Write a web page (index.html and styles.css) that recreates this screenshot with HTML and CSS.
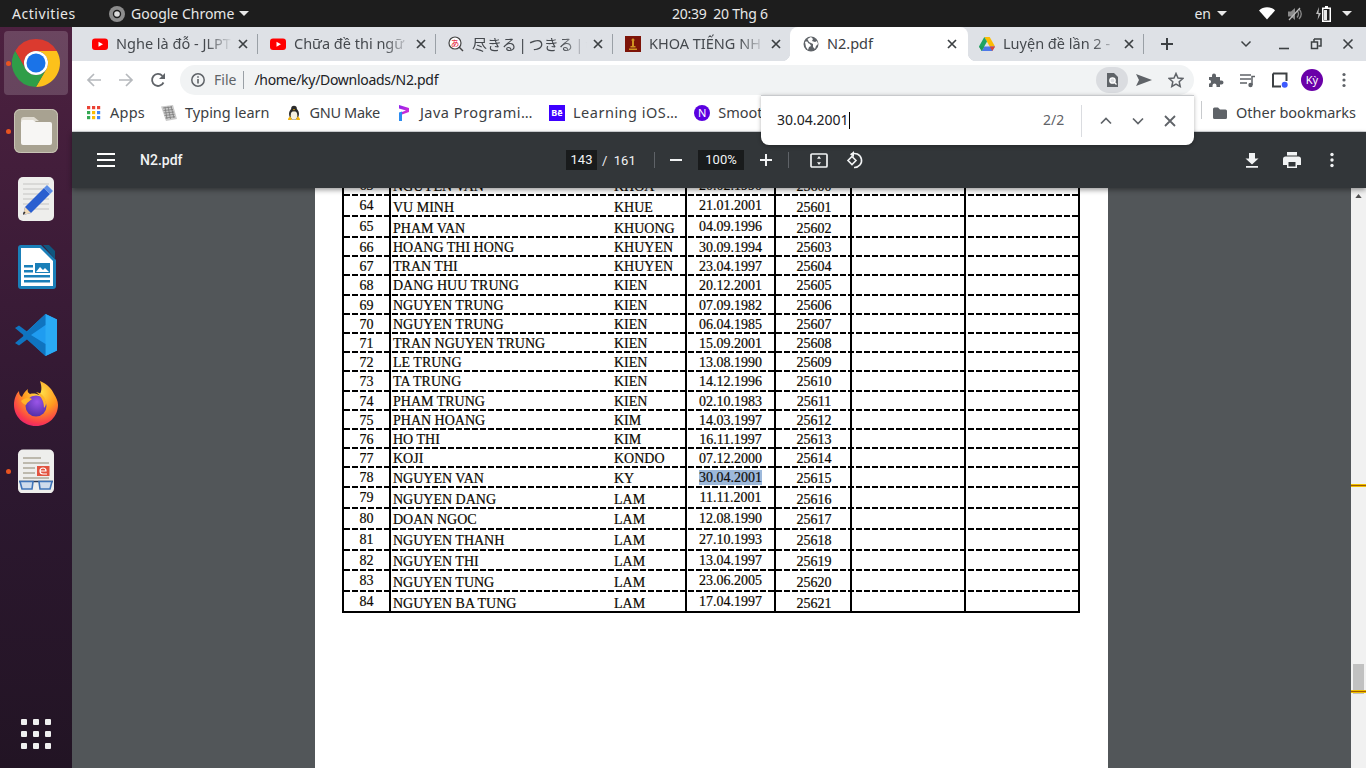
FILE: index.html
```html
<!DOCTYPE html>
<html lang="vi">
<head>
<meta charset="utf-8">
<title>N2.pdf</title>
<link rel="stylesheet" href="styles.css">
</head>
<body>
<svg class="defs" aria-hidden="true"><symbol id="x" viewBox="0 0 12 12"><path d="M2 2l8 8M10 2l-8 8" stroke="#3c4043" stroke-width="1.700" fill="none"/></symbol></svg>
<header class="topbar">
  <div class="top-left">
    <span class="activities">Activities</span>
    <span class="appmenu">
      <svg class="i16" viewBox="0 0 16 16"><circle cx="8" cy="8" r="8" fill="#8d8d8d"/><circle cx="8" cy="8" r="4.200" fill="#1d1d1d"/><circle cx="8" cy="8" r="2.800" fill="#dcdcdc"/></svg>
      <span>Google Chrome</span><i class="caret"></i>
    </span>
  </div>
  <div class="clock">20:39&nbsp;&nbsp;20 Thg 6</div>
  <div class="top-right">
    <span class="lang">en</span><i class="caret lang-caret"></i>
    <svg class="wifi" viewBox="0 0 16 13"><path d="M0 3.400C4.500-.9 11.500-.9 16 3.400L8 12.600Z" fill="#fff"/></svg>
    <svg class="vol" viewBox="0 0 16 16"><path d="M1 5.500h3L8 2v12L4 10.500H1Z" fill="#8a8a8a"/><path d="M10 4.500q3 3.500 0 7M12 3q4.500 5 0 10" fill="none" stroke="#8a8a8a" stroke-width="1.300"/><path d="M2 14L13 2" stroke="#bbb" stroke-width="1.200"/></svg>
    <svg class="batt" viewBox="0 0 17 16"><path d="M4 1L1 8h2.500L2.500 14 6 7H3.500Z" fill="#bbb"/><path d="M10 0h3v1.500h3V16H7V1.500h3Z" fill="#fff"/><rect x="8.500" y="3" width="6" height="11.500" fill="#1d1d1d"/><rect x="9" y="4" width="3" height="10" fill="#e8e8e8"/></svg>
    <i class="caret sys-caret"></i>
  </div>
</header>

<div class="desk">
  <nav class="dock">
    <div class="dock-item active"><i class="run"></i>
      <svg class="d48" viewBox="0 0 48 48"><path d="M24 0A24 24 0 0 1 44.780 12H24A12 12 0 0 0 13.600 30L3.200 12A24 24 0 0 1 24 0Z" fill="#db3a2f"/><path d="M44.780 12A24 24 0 0 1 24 48L34.400 30A12 12 0 0 0 24 12Z" fill="#fcc11b"/><path d="M3.200 12A24 24 0 0 0 24 48L34.400 30A12 12 0 0 1 13.600 30Z" fill="#2f9e48"/><circle cx="24" cy="24" r="12" fill="#fff"/><circle cx="24" cy="24" r="9.500" fill="#1a73e8"/></svg>
    </div>
    <div class="dock-item"><i class="run"></i>
      <svg class="d44" viewBox="0 0 44 44"><rect width="44" height="44" rx="6" fill="#a8a291"/><rect x=".5" y=".5" width="43" height="43" rx="6" fill="none" stroke="#c8c3b5"/><path d="M7 11a3 3 0 0 1 3-3h10l5 4H7Z" fill="#e0dcd2"/><path d="M7 13a2 2 0 0 1 2-2h10l3 2h14a2 2 0 0 1 2 2v19a2 2 0 0 1-2 2H9a2 2 0 0 1-2-2Z" fill="#f7f6f4"/></svg>
    </div>
    <div class="dock-item">
      <svg class="d44" viewBox="0 0 44 44"><rect x="4" width="36" height="44" rx="5" fill="#eeeeec"/><path d="M9 7h26M9 12h26M9 17h26M9 22h26M9 27h26M14 32h21" stroke="#c4c4c2" stroke-width="1"/><path d="M11 30L30 11l6 6-19 19-8 2Z" fill="#2a5fd0"/><path d="M30 11l3-3 6 6-3 3Z" fill="#5c8fe8"/><path d="M11 30l6 6-8 2Z" fill="#eed9b8"/><path d="M9 36l1.500-1.500 1 1L9.500 38Z" fill="#333"/></svg>
    </div>
    <div class="dock-item">
      <svg class="d44" viewBox="0 0 44 44"><path d="M7 0h20l15 15v26a3 3 0 0 1-3 3H7a3 3 0 0 1-3-3V3a3 3 0 0 1 3-3Z" fill="#1a7fb8"/><path d="M7 3h19l13 13v25H7Z" fill="#fff"/><path d="M29 0l6 0 6 6v8Z" fill="#10567f"/><path d="M10 20h9v2.500h-9ZM10 25h9v2.500h-9ZM10 30h26v2.500H10ZM10 35h26v2.500H10Z" fill="#1a7fb8"/><rect x="21" y="18" width="15" height="10" fill="#1a7fb8"/><path d="M22 27l4-5 3 3 2-2 4 4Z" fill="#fff"/></svg>
    </div>
    <div class="dock-item">
      <svg class="d44" viewBox="0 0 44 44"><path d="M31.500 1L43 6.500v31L31.500 43 9 22Z" fill="#1f9cf0"/><path d="M31.500 1v42L43 37.500v-31Z" fill="#2aaaf5"/><path d="M31.500 1L13 18.500 5 12.500 1 15l9 7.500L1 30l4 2.500 8-6L31.500 43V31L17 22l14.500-10Z" fill="#0f74c0"/></svg>
    </div>
    <div class="dock-item">
      <svg class="d48" viewBox="0 0 48 48"><defs><radialGradient id="ffa" cx=".6" cy=".25" r=".85"><stop offset="0" stop-color="#ffe14a"/><stop offset=".45" stop-color="#ff9a1f"/><stop offset=".8" stop-color="#fa3c4c"/><stop offset="1" stop-color="#e0187e"/></radialGradient><radialGradient id="ffb" cx=".55" cy=".3" r=".8"><stop offset="0" stop-color="#9a55e8"/><stop offset="1" stop-color="#4a2ba0"/></radialGradient></defs><path d="M24 47C11 47 2 37 2 26c0-6 2-11 5-14 0 3 1 5 3 6 1-3 3-6 6-8-1 2 0 4 2 5 4-1 7 0 9 1 3-3 3-8 1-14 7 3 12 8 14 13 2 3 4 7 4 11 0 11-9 21-22 21Z" fill="url(#ffa)"/><circle cx="24" cy="27" r="10.500" fill="url(#ffb)"/><path d="M9 22c3-3 8-4 11-2-2 2-5 3-6 6-2-1-4-2-5-4ZM24 13c5 1 10 5 10 11 0 2-1 4-2 5 0-7-3-12-8-16Z" fill="#ffb42a"/></svg>
    </div>
    <div class="dock-item"><i class="run"></i>
      <svg class="d44" viewBox="0 0 44 44"><rect x="4" y="0.500" width="36" height="44" rx="5" fill="#eeeeec"/><path d="M9 9h18M9 14h26M9 19h12M9 24h12M9 29h26" stroke="#bdb9ad" stroke-width="2"/><rect x="23" y="17" width="12.500" height="10" fill="#e2533f"/><path d="M26 22h6q0-3-3-3t-3 3 3 3h4" fill="none" stroke="#fff" stroke-width="1.200"/><path d="M5 32.500h34" stroke="#2b3a55" stroke-width="1.500"/><path d="M6 32.500h13l-1 7.500H8ZM25 32.500h13l-2 7.500H26Z" fill="#cfdcec" stroke="#3f74b8" stroke-width="1.600"/></svg>
    </div>
    <div class="show-apps"><i></i><i></i><i></i><i></i><i></i><i></i><i></i><i></i><i></i></div>
  </nav>

  <main class="browser">
    <div class="tabstrip">
      <div class="tab sep">
        <svg class="fav" viewBox="0 0 16 16"><rect y="2.500" width="16" height="11.500" rx="3" fill="#f00"/><path d="M6.500 5.700v5.100L11 8.200Z" fill="#fff"/></svg>
        <span class="tab-title">Nghe là đỗ - JLPT</span><svg class="tab-x"><use href="#x"/></svg>
      </div>
      <div class="tab sep">
        <svg class="fav" viewBox="0 0 16 16"><rect y="2.500" width="16" height="11.500" rx="3" fill="#f00"/><path d="M6.500 5.700v5.100L11 8.200Z" fill="#fff"/></svg>
        <span class="tab-title">Chữa đề thi ngữ</span><svg class="tab-x"><use href="#x"/></svg>
      </div>
      <div class="tab sep third">
        <svg class="fav" viewBox="0 0 16 16"><circle cx="7" cy="7" r="6" fill="#fff" stroke="#444" stroke-width="1.200"/><path d="M11 11l4 4" stroke="#444" stroke-width="1.500"/><text x="7" y="10" font-size="8.500" text-anchor="middle" fill="#e01030" font-family="Noto Sans CJK JP">あ</text></svg>
        <span class="tab-title cjk">尽きる | つきる | t</span><svg class="tab-x"><use href="#x"/></svg>
      </div>
      <div class="tab">
        <svg class="fav" viewBox="0 0 16 16"><rect width="16" height="16" fill="#7d1408"/><path d="M8 2.500a1.500 1.500 0 0 1 1 2.600V10h1.500v1.500h-5V10H7V5.100a1.500 1.500 0 0 1 1-2.600ZM4 12.500h8V14H4Z" fill="#d09320"/></svg>
        <span class="tab-title">KHOA TIẾNG NH</span><svg class="tab-x"><use href="#x"/></svg>
      </div>
      <div class="tab tab-active">
        <svg class="fav" viewBox="0 0 16 16"><circle cx="8" cy="8" r="7.500" fill="#5f6368"/><path d="M2 6c2-1 3 0 3 1l2 1 1 2-2 1-1 3-2-3ZM8 1l2 2-1 2 3 1 2-1 1 3-2 2-1 3-2-2V8L6 6 4.500 3Z" fill="#fff"/></svg>
        <span class="tab-title plain">N2.pdf</span><svg class="tab-x"><use href="#x"/></svg>
      </div>
      <div class="tab sep post-active">
        <svg class="fav" viewBox="0 0 16 16"><path d="M5.300 1h5.400L16 10.500h-5.300Z" fill="#fbbc04"/><path d="M5.300 1L0 10.500l2.700 4.500L8 5.600Z" fill="#1fa463"/><path d="M5.300 10.500H16L13.300 15H2.700Z" fill="#4d78e8"/><path d="M0 10.500l2.700 4.500 2.600-4.500Z" fill="#1f9a58"/><path d="M16 10.500l-2.700 4.500-2.600-4.500Z" fill="#e14334"/></svg>
        <span class="tab-title">Luyện đề lần 2 -</span><svg class="tab-x"><use href="#x"/></svg>
      </div>
      <svg class="newtab" viewBox="0 0 12 12"><path d="M6 0v12M0 6h12" stroke="#3c4043" stroke-width="2"/></svg>
      <div class="win-ctrl">
        <svg class="wc wc-list" viewBox="0 0 12 12"><path d="M1.500 3.500L6 8l4.500-4.500" fill="none" stroke="#3c4043" stroke-width="1.500"/></svg>
        <svg class="wc" viewBox="0 0 12 12"><path d="M1 10.500h10" stroke="#3c4043" stroke-width="1.600"/></svg>
        <svg class="wc" viewBox="0 0 12 12"><path d="M4 1h7v7H8.500M4 1v2.500M1.500 4h6v6.500h-6Z" fill="none" stroke="#3c4043" stroke-width="1.500"/></svg>
        <svg class="wc" viewBox="0 0 12 12"><path d="M1.500 1.500l9 9M10.500 1.500l-9 9" stroke="#3c4043" stroke-width="1.600"/></svg>
      </div>
    </div>

    <div class="toolbar">
      <span class="tb"><svg class="i16" viewBox="0 0 16 16"><path d="M15 8H2M8 2L2 8l6 6" fill="none" stroke="#b6b9bd" stroke-width="1.700"/></svg></span>
      <span class="tb"><svg class="i16" viewBox="0 0 16 16"><path d="M1 8h13M8 2l6 6-6 6" fill="none" stroke="#b6b9bd" stroke-width="1.700"/></svg></span>
      <span class="tb"><svg class="i16" viewBox="0 0 16 16"><path d="M13.500 10.500A6 6 0 1 1 12.400 3.800" fill="none" stroke="#5f6368" stroke-width="1.800"/><path d="M15 1v6H9Z" fill="#5f6368"/></svg></span>
      <div class="omnibox">
        <svg class="i16" viewBox="0 0 16 16"><circle cx="8" cy="8" r="6.200" fill="none" stroke="#5f6368" stroke-width="1.500"/><path d="M8 7v4.500M8 4.300v1.500" stroke="#5f6368" stroke-width="1.600"/></svg>
        <span class="scheme">File</span><i class="omni-sep"></i>
        <span class="url">/home/ky/Downloads/N2.pdf</span>
        <span class="omni-btn lens"><svg class="i16" viewBox="0 0 16 16"><path d="M3 1h7l4 4v10H3Z" fill="#5f6368"/><circle cx="8.500" cy="8.500" r="2.700" fill="#dadce0" stroke="#fff" stroke-width="1.300"/><path d="M10.500 10.500l2 2" stroke="#fff" stroke-width="1.300"/></svg></span>
        <span class="omni-btn"><svg class="i16" viewBox="0 0 16 16"><path d="M0 2l16 6-16 6 3-6Z" fill="#5f6368"/></svg></span>
        <span class="omni-btn"><svg class="i16" viewBox="0 0 16 16"><path d="M8 1.500l2 4.500 4.800.5-3.600 3.200 1 4.800L8 12l-4.200 2.500 1-4.800L1.200 6.500 6 6Z" fill="none" stroke="#5f6368" stroke-width="1.500"/></svg></span>
      </div>
      <div class="tb-right">
        <span class="tb"><svg class="i16" viewBox="0 0 16 16"><path d="M1 5h3V3.500a2 2 0 0 1 4 0V5h4v3.500h1.500a2 2 0 0 1 0 4H12V15H8.500v-1.500a2 2 0 0 0-4 0V15H1v-3.500h1a2 2 0 0 0 0-3.500H1Z" fill="#5f6368"/></svg></span>
        <span class="tb"><svg class="i16" viewBox="0 0 16 16"><path d="M0 3h11M0 7h11M0 11h7" stroke="#5f6368" stroke-width="1.500"/><path d="M12 13V4.500h3" fill="none" stroke="#5f6368" stroke-width="1.500"/><circle cx="10.500" cy="13" r="2.200" fill="#5f6368"/></svg></span>
        <span class="tb"><svg class="i16" viewBox="0 0 16 16"><path d="M1 1.500h13.500V9M9 14.500H1v-13" fill="none" stroke="#3c4043" stroke-width="2"/><circle cx="12.700" cy="12.700" r="3" fill="#3d5afe"/></svg></span>
        <span class="tb"><span class="avatar">Kỳ</span></span>
        <span class="tb"><svg class="i16" viewBox="0 0 16 16"><circle cx="8" cy="2.500" r="1.600" fill="#5f6368"/><circle cx="8" cy="8" r="1.600" fill="#5f6368"/><circle cx="8" cy="13.500" r="1.600" fill="#5f6368"/></svg></span>
      </div>
    </div>

    <div class="bookmarks">
      <span class="bm"><svg class="i16" viewBox="0 0 16 16"><g><rect x="1" y="1" width="3.200" height="3.200" fill="#ea4335"/><rect x="6" y="1" width="3.200" height="3.200" fill="#ea4335"/><rect x="11" y="1" width="3.200" height="3.200" fill="#ea4335"/><rect x="1" y="6" width="3.200" height="3.200" fill="#34a853"/><rect x="6" y="6" width="3.200" height="3.200" fill="#fbbc04"/><rect x="11" y="6" width="3.200" height="3.200" fill="#4285f4"/><rect x="1" y="11" width="3.200" height="3.200" fill="#34a853"/><rect x="6" y="11" width="3.200" height="3.200" fill="#fbbc04"/><rect x="11" y="11" width="3.200" height="3.200" fill="#4285f4"/></g></svg><span class="bm-t apps">Apps</span></span>
      <span class="bm"><svg class="i16" viewBox="0 0 16 16"><path d="M0 1.500L12 0l4 14-11 2Z" fill="#c9c9c9"/><path d="M2 3l9-1M2.500 5.500l9.500-1M3 8l10-1M3.500 10.500l10-1.200M4.500 13l9.500-1.300M4 2l2 12M7 1.500l2.500 12.500M10 1l3 12" stroke="#7c7c7c" stroke-width=".8"/></svg><span class="bm-t">Typing learn</span></span>
      <span class="bm"><svg class="i16" viewBox="0 0 16 16"><ellipse cx="8" cy="9" rx="5" ry="6" fill="#2b2b2b"/><ellipse cx="8" cy="10.500" rx="3.300" ry="4.200" fill="#f4f0e0"/><circle cx="8" cy="3.500" r="2.800" fill="#2b2b2b"/><path d="M6.800 4.200h2.400L8 5.500Z" fill="#f5b50a"/><path d="M2 15c0-2 1-3 2.500-3.500L6 15ZM14 15c0-2-1-3-2.500-3.500L10 15Z" fill="#f5b50a"/></svg><span class="bm-t gnu">GNU Make</span></span>
      <span class="bm"><svg class="i16" viewBox="0 0 16 16"><defs><linearGradient id="jv" x1="0" y1="0" x2="1" y2="1"><stop offset="0" stop-color="#8a20f0"/><stop offset="1" stop-color="#e030d0"/></linearGradient></defs><path d="M3 0l10 3v4L6 9.500V7l4-1.500L3 3.500Z" fill="url(#jv)"/><path d="M3 7.500l3-1V16H3Z" fill="#2b8cf0"/></svg><span class="bm-t wide">Java Programi…</span></span>
      <span class="bm"><span class="be">Bē</span><span class="bm-t wide">Learning iOS…</span></span>
      <span class="bm"><span class="nico">N</span><span class="bm-t">Smoot</span></span>
      <span class="bm other"><svg class="i16" viewBox="0 0 16 16"><path d="M1 4a1.500 1.500 0 0 1 1.500-1.500H6L8 4.500h5.500A1.500 1.500 0 0 1 15 6v6.500a1.500 1.500 0 0 1-1.500 1.500h-11A1.500 1.500 0 0 1 1 12.500Z" fill="#5f6368"/></svg><span class="bm-t">Other bookmarks</span></span>
    </div>

    <div class="pdfbar">
      <svg class="hamb" viewBox="0 0 18 14"><path d="M0 1h18M0 7h18M0 13h18" stroke="#fff" stroke-width="2"/></svg>
      <span class="pdf-title">N2.pdf</span>
      <div class="pdf-center">
        <span class="pg-box">143</span><span class="pg-total">/&nbsp;&nbsp;161</span><i class="pdf-sep"></i>
        <svg class="pdf-ic minus" viewBox="0 0 12 12"><path d="M0 6h12" stroke="#f1f3f4" stroke-width="2"/></svg>
        <span class="zoom-box">100%</span>
        <svg class="pdf-ic plus" viewBox="0 0 12 12"><path d="M0 6h12M6 0v12" stroke="#f1f3f4" stroke-width="2"/></svg>
        <i class="pdf-sep sep2"></i>
        <svg class="pdf-ic fit" viewBox="0 0 18 15"><rect x="1" y="1" width="16" height="13" rx="1" fill="none" stroke="#f1f3f4" stroke-width="1.700"/><path d="M9 3L7 5.800h4ZM9 12l-2-2.800h4Z" fill="#f1f3f4"/></svg>
        <svg class="pdf-ic rot" viewBox="0 0 18 18"><path d="M5 3.500A7 7 0 1 1 8 16.500" fill="none" stroke="#f1f3f4" stroke-width="1.600"/><path d="M8 0L4 3.500 8 6Z" fill="#f1f3f4"/><path d="M6 5.500L10 9.500l-4 4-4-4Z" fill="none" stroke="#f1f3f4" stroke-width="1.600"/></svg>
      </div>
      <div class="pdf-right">
        <svg class="i16" viewBox="0 0 16 16"><path d="M5 1h6v5.500h3.500L8 12.500 1.500 6.500H5ZM2 14h12v1.700H2Z" fill="#f1f3f4"/></svg>
        <svg class="i18" viewBox="0 0 18 16"><path d="M4 0h10v3.500H4ZM2.500 4.500h13A2.500 2.500 0 0 1 18 7v6h-4v3H4v-3H0V7a2.500 2.500 0 0 1 2.500-2.500Z" fill="#f1f3f4"/><rect x="5.500" y="10" width="7" height="4.500" fill="#323639"/></svg>
        <svg class="i16" viewBox="0 0 16 16"><circle cx="8" cy="2.500" r="1.700" fill="#f1f3f4"/><circle cx="8" cy="8" r="1.700" fill="#f1f3f4"/><circle cx="8" cy="13.500" r="1.700" fill="#f1f3f4"/></svg>
      </div>
    </div>

    <div class="viewer">
      <div class="viewport">
        <section class="page">
          <table class="sheet">
            <colgroup><col class="c1"><col class="c2"><col class="c3"><col class="c4"><col class="c5"><col class="c6"><col class="c7"></colgroup>
            <tr class="h20 first"><td class="n">63</td><td class="nm">NGUYEN VAN</td><td class="sn">KHOA</td><td class="d">20.02.1990</td><td class="c">25600</td><td></td><td></td></tr>
            <tr class="h21"><td class="n">64</td><td class="nm">VU MINH</td><td class="sn">KHUE</td><td class="d">21.01.2001</td><td class="c">25601</td><td></td><td></td></tr>
            <tr class="h21"><td class="n">65</td><td class="nm">PHAM VAN</td><td class="sn">KHUONG</td><td class="d">04.09.1996</td><td class="c">25602</td><td></td><td></td></tr>
            <tr class="h19"><td class="n">66</td><td class="nm">HOANG THI HONG</td><td class="sn">KHUYEN</td><td class="d">30.09.1994</td><td class="c">25603</td><td></td><td></td></tr>
            <tr class="h19"><td class="n">67</td><td class="nm">TRAN THI</td><td class="sn">KHUYEN</td><td class="d">23.04.1997</td><td class="c">25604</td><td></td><td></td></tr>
            <tr class="h20 flat"><td class="n">68</td><td class="nm">DANG HUU TRUNG</td><td class="sn">KIEN</td><td class="d">20.12.2001</td><td class="c">25605</td><td></td><td></td></tr>
            <tr class="h19"><td class="n">69</td><td class="nm">NGUYEN TRUNG</td><td class="sn">KIEN</td><td class="d">07.09.1982</td><td class="c">25606</td><td></td><td></td></tr>
            <tr class="h19"><td class="n">70</td><td class="nm">NGUYEN TRUNG</td><td class="sn">KIEN</td><td class="d">06.04.1985</td><td class="c">25607</td><td></td><td></td></tr>
            <tr class="h19"><td class="n">71</td><td class="nm">TRAN NGUYEN TRUNG</td><td class="sn">KIEN</td><td class="d">15.09.2001</td><td class="c">25608</td><td></td><td></td></tr>
            <tr class="h19"><td class="n">72</td><td class="nm">LE TRUNG</td><td class="sn">KIEN</td><td class="d">13.08.1990</td><td class="c">25609</td><td></td><td></td></tr>
            <tr class="h20 flat"><td class="n">73</td><td class="nm">TA TRUNG</td><td class="sn">KIEN</td><td class="d">14.12.1996</td><td class="c">25610</td><td></td><td></td></tr>
            <tr class="h19"><td class="n">74</td><td class="nm">PHAM TRUNG</td><td class="sn">KIEN</td><td class="d">02.10.1983</td><td class="c">25611</td><td></td><td></td></tr>
            <tr class="h19"><td class="n">75</td><td class="nm">PHAN HOANG</td><td class="sn">KIM</td><td class="d">14.03.1997</td><td class="c">25612</td><td></td><td></td></tr>
            <tr class="h19"><td class="n">76</td><td class="nm">HO THI</td><td class="sn">KIM</td><td class="d">16.11.1997</td><td class="c">25613</td><td></td><td></td></tr>
            <tr class="h19"><td class="n">77</td><td class="nm">KOJI</td><td class="sn">KONDO</td><td class="d">07.12.2000</td><td class="c">25614</td><td></td><td></td></tr>
            <tr class="h20"><td class="n">78</td><td class="nm">NGUYEN VAN</td><td class="sn">KY</td><td class="d"><mark class="hit">30.04.2001</mark></td><td class="c">25615</td><td></td><td></td></tr>
            <tr class="h21"><td class="n">79</td><td class="nm">NGUYEN DANG</td><td class="sn">LAM</td><td class="d">11.11.2001</td><td class="c">25616</td><td></td><td></td></tr>
            <tr class="h21 flat"><td class="n">80</td><td class="nm">DOAN NGOC</td><td class="sn">LAM</td><td class="d">12.08.1990</td><td class="c">25617</td><td></td><td></td></tr>
            <tr class="h21 flat"><td class="n">81</td><td class="nm">NGUYEN THANH</td><td class="sn">LAM</td><td class="d">27.10.1993</td><td class="c">25618</td><td></td><td></td></tr>
            <tr class="h20"><td class="n">82</td><td class="nm">NGUYEN THI</td><td class="sn">LAM</td><td class="d">13.04.1997</td><td class="c">25619</td><td></td><td></td></tr>
            <tr class="h21"><td class="n">83</td><td class="nm">NGUYEN TUNG</td><td class="sn">LAM</td><td class="d">23.06.2005</td><td class="c">25620</td><td></td><td></td></tr>
            <tr class="h21 last"><td class="n">84</td><td class="nm">NGUYEN BA TUNG</td><td class="sn">LAM</td><td class="d">17.04.1997</td><td class="c">25621</td><td></td><td></td></tr>
          </table>
        </section>
      </div>
      <aside class="scrollbar">
        <svg class="sb-up" viewBox="0 0 8 5"><path d="M4 0l4 5H0Z" fill="#505050"/></svg>
        <i class="sb-thumb"></i>
        <i class="sb-tick tick-a"></i>
        <i class="sb-tick tick-b"></i>
      </aside>
    </div>

    <div class="findbar">
      <span class="find-text"><span class="find-val">30.04.2001</span><i class="cursor"></i></span>
      <span class="find-count">2/2</span>
      <i class="find-sep"></i>
      <svg class="find-ic" viewBox="0 0 12 12"><path d="M1 8.500L6 3.500l5 5" fill="none" stroke="#5f6368" stroke-width="1.700"/></svg>
      <svg class="find-ic" viewBox="0 0 12 12"><path d="M1 3.500l5 5 5-5" fill="none" stroke="#5f6368" stroke-width="1.700"/></svg>
      <svg class="find-ic" viewBox="0 0 12 12"><path d="M1 1l10 10M11 1L1 11" fill="none" stroke="#5f6368" stroke-width="1.800"/></svg>
    </div>
  </main>
</div>
</body>
</html>
```
FILE: styles.css
```css
* { box-sizing: border-box; }
html, body { margin: 0; padding: 0; width: 1366px; height: 768px; overflow: hidden; }
body { font-family: "Noto Sans", "Open Sans", sans-serif; font-size: 14px; background: #525659; display: flex; flex-direction: column; }
i { display: block; font-style: normal; }
svg { display: block; flex: none; }
.defs { width: 0; height: 0; position: absolute; }
.i16 { width: 16px; height: 16px; }
.i18 { width: 18px; height: 16px; }

/* GNOME top bar */
.topbar { height: 27px; flex: none; background: #1d1d1d; color: #e8e8e8; display: grid; grid-template-columns: 660px auto 1fr; align-items: center; padding: 0 14px 0 12px; }
.top-left, .top-right, .appmenu { display: flex; align-items: center; }
.activities { width: 97px; letter-spacing: .55px; }
.appmenu { gap: 6px; }
.caret { width: 0; height: 0; border-left: 5px solid transparent; border-right: 5px solid transparent; border-top: 5px solid #e8e8e8; }
.appmenu .caret { margin-left: -1px; }
.clock { font-size: 14px; letter-spacing: -.25px; }
.top-right { justify-content: flex-end; }
.lang { color: #e8e8e8; margin-right: 6px; }
.wifi { width: 16px; height: 13px; margin-left: 32px; }
.vol { width: 16px; height: 16px; margin-left: 12px; }
.batt { width: 17px; height: 16px; margin-left: 12px; }
.sys-caret { margin-left: 10px; }

.desk { flex: 1; display: flex; min-height: 0; }

/* dock */
.dock { width: 72px; flex: none; background: linear-gradient(180deg, #4d2140 0%, #3d1c38 30%, #2d1830 60%, #221424 100%); display: flex; flex-direction: column; align-items: center; padding-top: 4px; position: relative; }
.dock-item { width: 64px; height: 64px; margin-bottom: 4px; display: flex; align-items: center; justify-content: center; border-radius: 4px; position: relative; }
.dock-item.active { background: rgba(255,255,255,.17); }
.d48 { width: 48px; height: 48px; }
.d44 { width: 44px; height: 44px; }
.run { position: absolute; left: 2px; top: 30px; width: 5px; height: 5px; border-radius: 50%; background: #e95420; }
.show-apps { margin-top: auto; margin-bottom: 19px; display: grid; grid-template-columns: repeat(3, 6px); gap: 6px; }
.show-apps i { width: 6px; height: 6px; border-radius: 1px; background: #f0f0f0; }

/* chrome */
.browser { flex: 1; min-width: 0; display: flex; flex-direction: column; position: relative; background: #fff; }
.tabstrip { height: 34px; flex: none; background: #dee1e6; display: flex; align-items: center; padding-left: 8px; }
.tab { width: 178px; height: 34px; flex: none; display: flex; align-items: center; padding: 0 9px 0 12px; position: relative; color: #45494e; }
.tab.third { width: 177px; }
.tab.sep::after { content: ""; position: absolute; right: 0; top: 7px; width: 1px; height: 20px; background: #9aa0a6; }
.fav { width: 16px; height: 16px; margin-right: 8px; }
.tab-title { flex: 1; min-width: 0; font-size: 14.500px; padding-bottom: 2px; white-space: nowrap; overflow: hidden; -webkit-mask-image: linear-gradient(90deg, #000 78%, transparent 100%); mask-image: linear-gradient(90deg, #000 78%, transparent 100%); }
.tab-title.plain { -webkit-mask-image: none; mask-image: none; }
.tab-title.cjk { font-family: "Noto Sans", "Noto Sans CJK JP", sans-serif; font-size: 15px; word-spacing: -2px; }
.tab-x { width: 12px; height: 12px; margin-left: 5px; }
.tab-active { background: #fff; border-radius: 8px 8px 0 0; margin-left: -1px; padding: 0 10px 0 13px; color: #3c4043; }
.tab-active::before, .tab-active::after { content: ""; position: absolute; bottom: 0; width: 8px; height: 8px; }
.tab-active::before { left: -8px; background: radial-gradient(circle at 0 0, #dee1e6 8px, #fff 8.500px); }
.tab-active::after { right: -8px; background: radial-gradient(circle at 100% 0, #dee1e6 8px, #fff 8.500px); }
.post-active { width: 176px; padding-left: 11px; }
.newtab { width: 12px; height: 12px; margin-left: 17px; }
.win-ctrl { margin-left: auto; display: flex; align-items: center; padding-right: 12px; gap: 20px; }
.wc { width: 12px; height: 12px; }
.wc-list { margin-right: 6px; }

.toolbar { height: 34px; flex: none; display: flex; align-items: flex-end; padding-left: 6px; background: #fff; }
.tb { width: 32px; height: 30px; flex: none; display: flex; align-items: center; justify-content: center; }
.omnibox { width: 1014px; height: 30px; margin-left: 6px; border-radius: 15px; background: #f1f3f4; display: flex; align-items: center; padding: 0 2px 0 10px; color: #5f6368; }
.scheme { margin-left: 8px; padding-bottom: 2px; }
.omni-sep { width: 1px; height: 18px; background: #9aa0a6; margin: 0 10px 0 7px; }
.url { color: #202124; flex: 1; letter-spacing: -.3px; padding-bottom: 2px; }
.omni-btn { width: 32px; height: 26px; border-radius: 13px; display: flex; align-items: center; justify-content: center; }
.lens { background: #dadce0; }
.tb-right { display: flex; margin-left: 6px; }
.avatar { width: 22px; height: 22px; border-radius: 50%; background: #6a00a8; color: #fff; font-size: 11px; line-height: 22px; text-align: center; }

.bookmarks { height: 37px; flex: none; display: flex; align-items: center; padding: 0 10px 0 14px; gap: 16px; color: #3c4043; background: #fff; border-bottom: 1px solid #d5d7da; }
.bm { display: flex; align-items: center; gap: 8px; white-space: nowrap; }
.bm-t { font-size: 14.500px; padding-bottom: 2px; }
.apps { letter-spacing: .25px; }
.gnu { letter-spacing: -.35px; }
.wide { letter-spacing: .5px; }
.be { width: 16px; height: 16px; background: #3d00ff; color: #fff; font-size: 9px; line-height: 16px; text-align: center; font-weight: 700; }
.nico { width: 16px; height: 16px; border-radius: 50%; background: #5a00e0; color: #fff; font-size: 11px; line-height: 16px; text-align: center; }
.other { margin-left: auto; position: relative; padding-left: 11px; }
.other::before { content: ""; position: absolute; left: 0; top: -1px; width: 1px; height: 18px; background: #c8cacd; }

/* pdf toolbar */
.pdfbar { height: 56px; flex: none; background: #323639; color: #f1f3f4; display: flex; align-items: center; padding-left: 25px; font-family: Roboto, sans-serif; position: relative; z-index: 2; box-shadow: 0 2px 5px rgba(0,0,0,.4); }
.hamb { width: 18px; height: 14px; }
.pdf-title { margin-left: 25px; font-size: 14px; font-weight: 500; width: 426px; flex: none; }
.pdf-center { display: flex; align-items: center; font-size: 13px; }
.pg-box { width: 31px; height: 20px; background: #191b1c; text-align: center; line-height: 20px; }
.pg-total { margin-left: 5px; width: 52px; }
.pdf-sep { width: 1px; height: 16px; background: #5f6368; }
.pdf-ic { flex: none; }
.minus { width: 12px; height: 12px; margin-left: 15px; }
.zoom-box { width: 46px; height: 20px; background: #191b1c; text-align: center; line-height: 20px; margin-left: 16px; }
.plus { width: 12px; height: 12px; margin-left: 16px; }
.sep2 { margin-left: 16px; }
.fit { width: 18px; height: 15px; margin-left: 21px; }
.rot { width: 18px; height: 18px; margin-left: 18px; }
.pdf-right { margin-left: auto; display: flex; align-items: center; gap: 23px; padding-right: 26px; }

/* viewer */
.viewer { flex: 1; min-height: 0; display: flex; background: #525659; }
.viewport { flex: 1; min-width: 0; overflow: hidden; display: flex; justify-content: center; }
.page { width: 793px; height: 700px; background: #fff; padding-left: 27px; }
.sheet { width: 738px; margin-top: -12px; border-collapse: separate; border-spacing: 0; table-layout: fixed; font-family: "Liberation Serif", serif; font-size: 14px; line-height: 14px; color: #0c0800; border-left: 2px solid #000; -webkit-text-stroke: .2px #0c0800; }
.c1 { width: 47px; } .c2 { width: 221px; } .c3 { width: 75px; } .c4 { width: 89px; } .c5 { width: 76px; } .c6, .c7 { width: 114px; }
.sheet tr { background: repeating-linear-gradient(90deg, #000 0 6px, transparent 6px 8px) left bottom / 100% 2px no-repeat; }
.sheet tr.last { background: linear-gradient(#000, #000) left bottom / 100% 2px no-repeat; }
.sheet td { padding: 2px 0 2px; border-right: 2px solid #000; vertical-align: middle; white-space: nowrap; }
.sheet td.nm { border-right: 0; padding-left: 2px; }
.sheet td.sn { padding-left: 2px; }
.sheet td.n, .sheet td.d, .sheet td.c { text-align: center; }
.sheet td.c { padding-left: 2px; }
.h19 td { height: 19px; } .h20 td { height: 20px; } .h21 td { height: 21px; }
.sheet td.nm, .sheet td.sn, .sheet td.c { padding-top: 3px; }
.sheet .h21 td.nm, .sheet .h21 td.sn, .sheet .h21 td.c { padding-top: 5px; }
.sheet .h21 td.n, .sheet .h21 td.d { padding-bottom: 3px; }
.sheet .flat td.nm, .sheet .flat td.sn, .sheet .flat td.c { padding-top: 1px; }
.sheet .h21.flat td.nm, .sheet .h21.flat td.sn, .sheet .h21.flat td.c { padding-top: 3px; }
.hit { background: #9db9db; color: #111; padding: 0; }

.scrollbar { width: 15px; flex: none; background: #f1f1f1; position: relative; }
.sb-up { position: absolute; left: 4px; top: 6px; width: 7px; height: 4px; }
.sb-thumb { position: absolute; left: 2px; top: 476px; width: 11px; height: 30px; background: #c1c1c1; }
.sb-tick { position: absolute; left: 0; width: 15px; height: 3px; background: linear-gradient(#f0c000 0 1px, #a05a00 1px 2px, #f0c000 2px); }
.tick-a { top: 296px; }
.tick-b { top: 502px; }

/* find in page */
.findbar { position: absolute; left: 689px; top: 68px; width: 433px; height: 50px; background: #fff; border-radius: 0 0 8px 8px; border-top: 1px solid #c8cacd; box-shadow: 0 1px 4px rgba(0,0,0,.3); display: flex; align-items: center; padding-left: 16px; z-index: 3; color: #3c4043; }
.find-text { display: flex; align-items: center; flex: none; width: 266px; color: #202124; }
.find-val { padding-bottom: 2px; }
.cursor { width: 1px; height: 17px; background: #000; }
.find-count { flex: none; width: 38px; color: #5f6368; padding-bottom: 2px; }
.find-sep { flex: none; width: 1px; height: 32px; background: #dadce0; margin-right: 18px; }
.find-ic { width: 12px; height: 12px; }
.find-ic + .find-ic { margin-left: 20px; }
```
